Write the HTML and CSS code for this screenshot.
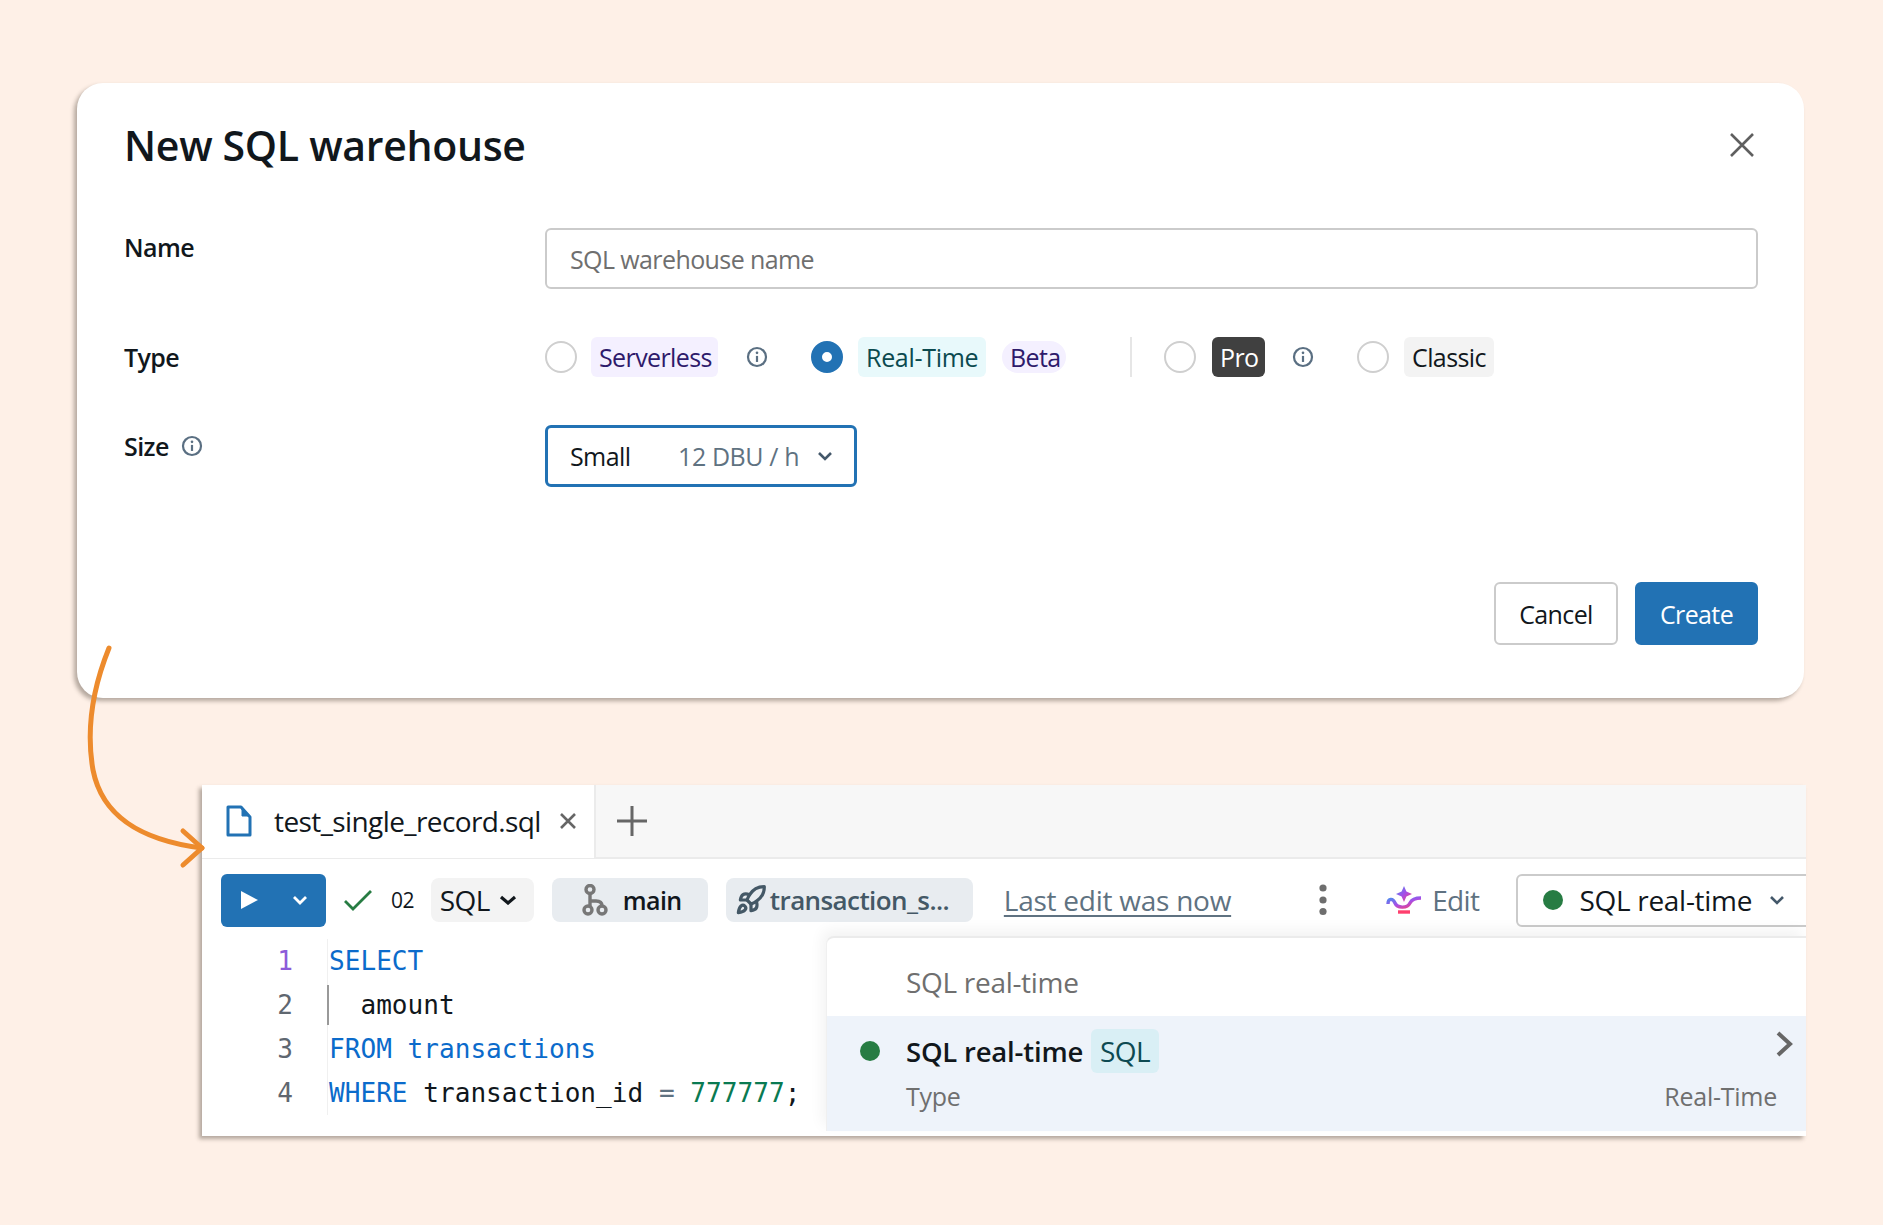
FILE: index.html
```html
<!DOCTYPE html>
<html lang="en">
<head>
<meta charset="utf-8">
<title>New SQL warehouse</title>
<link rel="stylesheet" href="styles.css">
</head>
<body>
<section class="modal">
  <header class="modal-head">
    <h1 class="modal-title">New SQL warehouse</h1>
    <svg class="close-icon" viewBox="0 0 24 24"><path d="M1 1 23 23M23 1 1 23"/></svg>
  </header>
  <div class="form">
    <div class="label">Name</div>
    <div class="input">SQL warehouse name</div>
    <div class="label label-type">Type</div>
    <div class="types">
      <span class="radio"></span>
      <span class="tag tag-purple">Serverless</span>
      <svg class="info info-a" viewBox="0 0 20 20"><circle cx="10" cy="10" r="8.2"/><path d="M10 9v5.5"/><circle class="info-dot" cx="10" cy="6.2" r="1.2"/></svg>
      <span class="radio radio-on"></span>
      <span class="tag tag-teal">Real-Time</span>
      <span class="tag tag-beta">Beta</span>
      <span class="divider"></span>
      <span class="radio"></span>
      <span class="tag tag-dark">Pro</span>
      <svg class="info info-b" viewBox="0 0 20 20"><circle cx="10" cy="10" r="8.2"/><path d="M10 9v5.5"/><circle class="info-dot" cx="10" cy="6.2" r="1.2"/></svg>
      <span class="radio radio-last"></span>
      <span class="tag tag-grey">Classic</span>
    </div>
    <div class="label label-size">Size
      <svg class="info" viewBox="0 0 20 20"><circle cx="10" cy="10" r="8.2"/><path d="M10 9v5.5"/><circle class="info-dot" cx="10" cy="6.2" r="1.2"/></svg>
    </div>
    <div class="select">
      <span class="select-name">Small</span>
      <span class="select-rate">12 DBU / h</span>
      <svg class="chev chev-select" viewBox="0 0 16 10"><path d="M2 2l6 6 6-6"/></svg>
    </div>
  </div>
  <footer class="modal-foot">
    <button class="btn">Cancel</button>
    <button class="btn btn-primary">Create</button>
  </footer>
</section>

<section class="editor">
  <div class="tabs">
    <div class="tab">
      <svg class="file-icon" viewBox="0 0 26 32"><path d="M2 2h13l9 10v18H2z"/><path class="file-fold" d="M16 3v8h7z"/></svg>
      <span class="tab-name">test_single_record.sql</span>
      <svg class="tab-close" viewBox="0 0 18 16"><path d="M2 1l14 14M16 1 2 15"/></svg>
    </div>
    <svg class="tab-plus" viewBox="0 0 32 32"><path d="M16 1v30M1 16h30"/></svg>
  </div>
  <div class="toolbar">
    <div class="run">
      <svg class="play" viewBox="0 0 18 18"><path d="M1 0l17 9L1 18z"/></svg>
      <svg class="chev chev-run" viewBox="0 0 16 10"><path d="M2 2l6 6 6-6"/></svg>
    </div>
    <svg class="check" viewBox="0 0 28 22"><path d="M1 12l8 8L27 2"/></svg>
    <span class="count">02</span>
    <div class="pill pill-sql">SQL<svg class="chev chev-sql" viewBox="0 0 18 10"><path d="M2 2l7 6 7-6"/></svg></div>
    <div class="pill pill-main">
      <svg class="branch" viewBox="0 0 26 32"><circle cx="8" cy="5.500" r="4"/><circle cx="6" cy="26" r="4"/><circle cx="20" cy="26" r="4"/><path d="M8 9.500V17h6q6 0 6 5M8 17v5"/></svg>
      main
    </div>
    <div class="pill pill-schema">
      <svg class="rocket" viewBox="0 0 24 24"><path d="M4.500 16.500c-1.500 1.260-2 5-2 5s3.740-.5 5-2c.71-.84.7-2.130-.09-2.910a2.180 2.180 0 0 0-2.910-.09z"/><path d="m12 15-3-3a22 22 0 0 1 2-3.950A12.880 12.880 0 0 1 22 2c0 2.720-.78 7.500-6 11a22.350 22.350 0 0 1-4 2z"/><path d="M9 12H4s.55-3.030 2-4c1.620-1.080 5 0 5 0"/><path d="M12 15v5s3.030-.55 4-2c1.080-1.620 0-5 0-5"/></svg>
      transaction_s...
    </div>
    <span class="edited">Last edit was now</span>
    <svg class="kebab" viewBox="0 0 8 32"><circle cx="4" cy="4" r="3.600"/><circle cx="4" cy="16" r="3.600"/><circle cx="4" cy="27.500" r="3.600"/></svg>
    <svg class="assist" viewBox="0 0 36 28">
      <defs><linearGradient id="assistGrad" x1="0" y1="0" x2="1" y2="1"><stop offset="0" stop-color="#4c8dee"/><stop offset=".5" stop-color="#a44fe8"/><stop offset="1" stop-color="#ff3f6e"/></linearGradient></defs>
      <path class="assist-star" d="M18 0l2.400 5.600L26 8l-5.600 2.400L18 16l-2.400-5.600L10 8l5.600-2.400z"/>
      <path class="assist-bowl" d="M2 18c0-6 5-6 7-1 2 5 12 6 15 0 1.500-3 4-5 11-5"/>
      <path class="assist-base" d="M12 26h12"/>
    </svg>
    <span class="edit-label">Edit</span>
    <div class="compute">
      <span class="dot"></span>
      <span class="compute-name">SQL real-time</span>
      <svg class="chev chev-compute" viewBox="0 0 16 10"><path d="M2 2l6 6 6-6"/></svg>
    </div>
  </div>
  <div class="work">
    <div class="code">
      <div class="line"><span class="num num-active">1</span><span class="src"><span class="kw">SELECT</span></span></div>
      <div class="line"><span class="num">2</span><span class="src src-guide">  amount</span></div>
      <div class="line"><span class="num">3</span><span class="src"><span class="kw">FROM transactions</span></span></div>
      <div class="line"><span class="num">4</span><span class="src"><span class="kw">WHERE</span> transaction_id <span class="op">=</span> <span class="lit">777777</span>;</span></div>
    </div>
    <div class="popover">
      <div class="pop-head">SQL real-time</div>
      <div class="pop-row">
        <div class="pop-title">
          <span class="dot"></span>
          <strong class="pop-name">SQL real-time</strong>
          <span class="tag-sql">SQL</span>
          <svg class="pop-chev" viewBox="0 0 18 26"><path d="M3 2l12 11L3 24"/></svg>
        </div>
        <div class="pop-meta"><span>Type</span><span>Real-Time</span></div>
      </div>
    </div>
  </div>
</section>

<svg class="arrow" viewBox="0 0 260 260">
  <path d="M29 8C12 50 6 90 13 130 22 176 60 200 122 208"/>
  <path d="M103 191l19 17-19 17"/>
</svg>
</body>
</html>
```
FILE: styles.css
```css
* { box-sizing: border-box; }
html, body { margin: 0; }
body {
  position: relative;
  width: 1883px;
  height: 1225px;
  overflow: hidden;
  padding: 83px 0 0 77px;
  background: #fef0e7;
  font-family: "Open Sans", "Noto Sans", sans-serif;
  font-size: 25px;
  color: #11171c;
  letter-spacing: -0.6px;
}
svg { display: block; flex: none; fill: none; }

.modal {
  width: 1727px;
  height: 615px;
  padding: 0 46px 0 47px;
  background: #fff;
  border-radius: 26px;
  box-shadow: -3px 3px 4px rgba(60, 50, 40, .38);
}
.modal-head {
  display: flex;
  align-items: center;
  justify-content: space-between;
  height: 124px;
  margin-bottom: 21px;
}
.modal-title { margin: 0; font-size: 41px; font-weight: 600; letter-spacing: -0.3px; }
.close-icon { width: 24px; height: 24px; margin-right: 4px; stroke: #5f5f5f; stroke-width: 2.6; }

.form { display: grid; grid-template-columns: 421px 1fr; row-gap: 48px; align-items: start; }
.label { font-weight: 600; line-height: 38px; font-size: 25px; }
.label-type { padding-top: 1px; }
.label-size { display: flex; align-items: center; gap: 12px; padding-top: 2px; }
.input {
  height: 61px;
  padding-left: 23px;
  border: 2px solid #cbcbcb;
  border-radius: 6px;
  color: #6f6f6f;
  line-height: 59px;
}
.types { display: flex; align-items: center; height: 40px; }
.radio { flex: none; width: 32px; height: 32px; margin-right: 14px; border: 2px solid #cfcfcf; border-radius: 50%; }
.radio-on { border: 11px solid #2272b4; }
.tag { display: flex; flex: none; align-items: center; height: 40px; padding: 0 8px; border-radius: 6px; white-space: nowrap; }
.tag-purple { width: 127px; background: #f4f0ff; color: #2e1a6b; }
.tag-teal { width: 128px; margin-left: 1px; background: #e8f9fb; color: #0b4a4f; letter-spacing: -0.3px; }
.tag-beta { width: 64px; height: 32px; margin-left: 16px; border-radius: 16px; background: #f4f0ff; color: #2e1a6b; }
.tag-dark { width: 53px; margin-left: 2px; background: #404040; color: #fff; }
.tag-grey { width: 90px; margin-left: 1px; background: #f3f3f3; }
.info { width: 22px; height: 22px; stroke: #5a6f82; stroke-width: 2; }
.info-dot { fill: #5a6f82; stroke: none; }
.info-a { margin: 0 43px 0 28px; }
.info-b { margin: 0 43px 0 27px; }
.divider { flex: none; width: 2px; height: 40px; margin: 0 32px 0 64px; background: #e6e6e6; }
.select {
  display: flex;
  align-items: center;
  width: 312px;
  height: 62px;
  padding-left: 22px;
  border: 3px solid #2272b4;
  border-radius: 6px;
}
.select-name { width: 108px; }
.select-rate { width: 139px; color: #5f7281; white-space: nowrap; letter-spacing: -0.4px; }
.chev { stroke: #11171c; stroke-width: 2.6; }
.chev-select { width: 16px; height: 10px; stroke: #44586a; }
.modal-foot { display: flex; justify-content: flex-end; gap: 17px; margin-top: 95px; }
.btn {
  width: 124px;
  height: 63px;
  padding: 0;
  border: 2px solid #cbcbcb;
  border-radius: 6px;
  background: #fff;
  color: #11171c;
  font: inherit;
  letter-spacing: inherit;
}
.btn-primary { width: 123px; border-color: #2272b4; background: #2272b4; color: #fff; }

.editor {
  width: 1604px;
  height: 351px;
  margin: 87px 0 0 125px;
  background: #fff;
  box-shadow: -3px 3px 4px rgba(60, 50, 40, .38);
  overflow: hidden;
}
.tabs { display: flex; align-items: center; height: 74px; border-bottom: 2px solid #ebebeb; background: #f7f7f7; }
.tab { display: flex; align-items: center; width: 394px; height: 74px; border-right: 2px solid #ebebeb; background: #fff; }
.file-icon { width: 26px; height: 32px; margin-left: 24px; stroke: #2272b4; stroke-width: 3; stroke-linejoin: round; }
.file-fold { fill: #2272b4; stroke-width: 1; }
.tab-name { width: 285px; margin-left: 22px; font-size: 28px; white-space: nowrap; letter-spacing: -0.6px; }
.tab-close { width: 18px; height: 16px; stroke: #666; stroke-width: 2.6; }
.tab-plus { width: 32px; height: 32px; margin-left: 20px; stroke: #666; stroke-width: 3; }

.toolbar {
  display: flex;
  align-items: center;
  height: 77px;
  padding: 5px 0 0 19px;
  background: #fff;
  white-space: nowrap;
}
.toolbar > * { flex: none; }
.run { display: flex; align-items: center; width: 105px; height: 53px; padding-left: 19px; border-radius: 6px; background: #2272b4; }
.play { width: 18px; height: 18px; fill: #fff; }
.chev-run { width: 16px; height: 10px; margin-left: 34px; stroke: #fff; stroke-width: 2.8; }
.check { width: 28px; height: 22px; margin-left: 18px; stroke: #277c43; stroke-width: 2.8; }
.count { margin-left: 19px; font-size: 21px; }
.pill { display: flex; align-items: center; height: 44px; border-radius: 8px; }
.pill-sql { width: 103px; margin-left: 17px; padding-left: 9px; background: #f3f3f3; font-size: 28px; }
.chev-sql { width: 18px; height: 10px; margin-left: 9px; stroke-width: 3.2; }
.pill-main { width: 156px; margin-left: 18px; padding-left: 30px; background: #e8ecf0; font-weight: 600; font-size: 25px; }
.branch { width: 26px; height: 32px; margin-right: 15px; stroke: #777; stroke-width: 3.4; }
.pill-schema { width: 247px; margin-left: 18px; padding-left: 9px; background: #e8ecf0; color: #445866; font-weight: 600; font-size: 26px; letter-spacing: -0.6px; }
.rocket { width: 32px; height: 32px; margin-right: 3px; stroke: #445866; stroke-width: 2.4; stroke-linejoin: round; stroke-linecap: round; }
.edited { margin-left: 31px; color: #5f7281; text-decoration: underline; text-underline-offset: 4px; font-size: 28px; letter-spacing: -0.25px; }
.kebab { width: 8px; height: 32px; margin-left: 88px; fill: #6e6e6e; }
.assist { width: 36px; height: 28px; margin-left: 59px; }
.assist-star { fill: url(#assistGrad); }
.assist-bowl, .assist-base { stroke: url(#assistGrad); stroke-width: 3.4; }
.assist-base { stroke: #ff3f6e; }
.edit-label { margin-left: 10px; color: #5f7281; font-size: 28px; }
.compute {
  display: flex;
  align-items: center;
  width: 310px;
  height: 53px;
  margin-left: 37px;
  padding-left: 25px;
  border: 2px solid #cbcbcb;
  border-radius: 6px;
}
.dot { flex: none; width: 20px; height: 20px; border-radius: 50%; background: #277c43; }
.compute-name { margin-left: 16px; font-size: 28px; letter-spacing: -0.3px; }
.chev-compute { width: 16px; height: 10px; margin-left: 17px; stroke: #44586a; }

.work { display: flex; height: 200px; }
.code { width: 624px; padding-top: 3px; font-family: "DejaVu Sans Mono", "Liberation Mono", monospace; font-size: 26.1px; letter-spacing: 0; }
.line { display: flex; height: 44px; line-height: 44px; }
.num { width: 91px; text-align: right; color: #5f6770; }
.num-active { color: #8c5bd9; }
.src { margin-left: 34px; padding-left: 1px; white-space: pre; border-left: 1px solid #f0f0f0; }
.src-guide { position: relative; }
.src-guide::before { content: ""; position: absolute; left: -1px; top: 2px; width: 2px; height: 40px; background: #999; }
.kw { color: #0b6bcb; }
.op { color: #5f7281; }
.lit { color: #0a7a52; }
.popover {
  flex: none;
  width: 980px;
  height: 195px;
  border-top: 2px solid #ebebeb;
  border-left: 1px solid #f0f0f0;
  border-radius: 8px 0 0 0;
  box-shadow: -4px -6px 14px rgba(0, 0, 0, .05);
  background: #fff;
}
.pop-head { height: 78px; padding-left: 79px; color: #6f6f6f; font-size: 28px; letter-spacing: -0.3px; line-height: 88px; }
.pop-row { height: 115px; padding: 13px 29px 0 33px; background: #eef3fa; }
.pop-title { position: relative; display: flex; align-items: center; height: 44px; }
.pop-name { margin-left: 26px; font-weight: 600; font-size: 27.5px; letter-spacing: -0.2px; }
.tag-sql { margin-left: 8px; padding: 0 9px; height: 44px; line-height: 44px; border-radius: 6px; background: #d9eff5; color: #0d4a52; font-size: 28px; }
.pop-chev { position: absolute; right: -16px; top: 2px; width: 18px; height: 26px; stroke: #666; stroke-width: 4; }
.pop-meta { display: flex; justify-content: space-between; margin-top: 6px; padding-left: 46px; color: #6f6f6f; font-size: 25px; letter-spacing: -0.25px; }

.arrow { position: absolute; left: 80px; top: 640px; width: 260px; height: 260px; stroke: #ed8b2d; stroke-width: 5; stroke-linecap: round; stroke-linejoin: round; }
```
